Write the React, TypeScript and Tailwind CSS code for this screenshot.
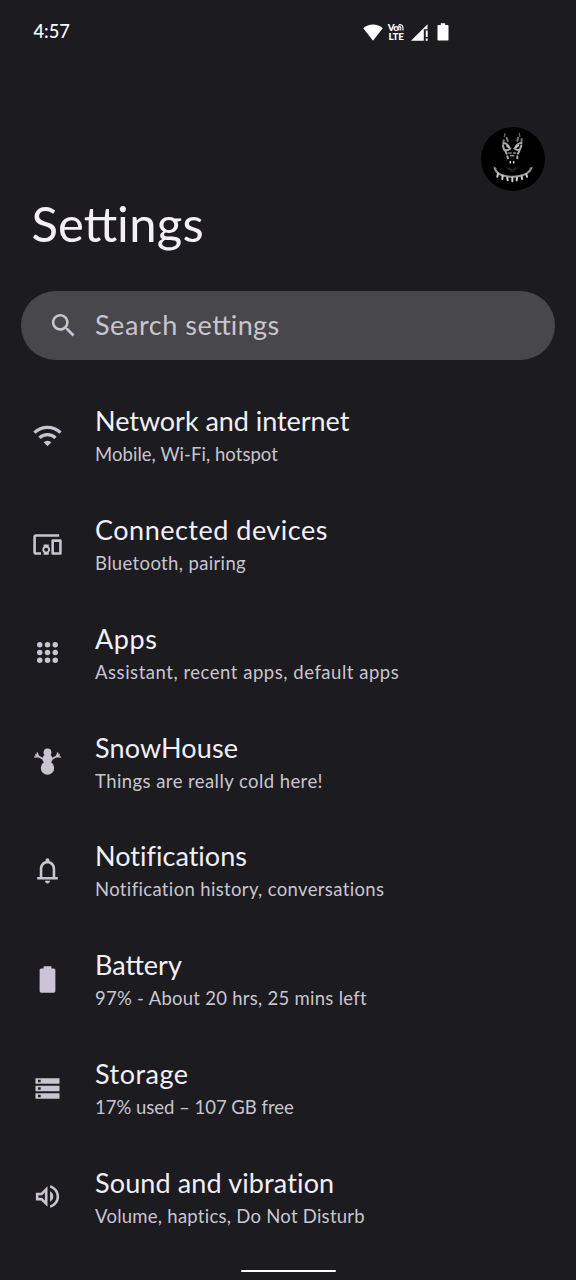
import type { ReactNode } from "react";

type Row = {
  title: string;
  sub: string;
  titleClass: string;
  subClass: string;
  icon: ReactNode;
};

function Glyph({ d, className = "fill-[#c9c5d0]" }: { d: string; className?: string }) {
  return (
    <svg viewBox="0 0 24 24" className={`size-[31px] ${className}`}>
      <path d={d} fillRule="evenodd" />
    </svg>
  );
}

function Snowman() {
  return (
    <svg viewBox="0 0 31 31" className="size-[31px] fill-[#c9c5d0] stroke-[#c9c5d0]">
      <circle cx="15.5" cy="6.3" r="3.9" stroke="none" />
      <circle cx="15.5" cy="13" r="5" stroke="none" />
      <circle cx="15.5" cy="22" r="6.7" stroke="none" />
      <path
        d="M12 13.5L3.2 8.5M19 13.5l8.8-5M6.4 10.3L5 6.5M24.6 10.3l1.4-3.8M6.6 10.6l-4.4.3M24.4 10.6l4.4.3"
        fill="none"
        strokeWidth="1.5"
      />
    </svg>
  );
}

const rows: Row[] = [
  {
    title: "Network and internet",
    sub: "Mobile, Wi-Fi, hotspot",
    titleClass: "tracking-[-0.05px]",
    subClass: "tracking-[0.05px]",
    icon: (
      <svg viewBox="0 0 24 24" className="size-[31px] fill-none stroke-[#c9c5d0]">
        <path d="M1.9 9.8a14.3 14.3 0 0 1 20.2 0M5.8 13.9a8.8 8.8 0 0 1 12.4 0" strokeWidth="2.5" />
        <path d="M12 20.3l-3-3a4.3 4.3 0 0 1 6 0z" className="fill-[#c9c5d0]" stroke="none" />
      </svg>
    ),
  },
  {
    title: "Connected devices",
    sub: "Bluetooth, pairing",
    titleClass: "tracking-[0.5px]",
    subClass: "tracking-[0.36px]",
    icon: (
      <Glyph d="M3 6h18V4H3c-1.1 0-2 .9-2 2v12c0 1.1.9 2 2 2h4v-2H3V6zm10 6H9v1.78c-.61.55-1 1.33-1 2.22s.39 1.67 1 2.22V20h4v-1.78c.61-.55 1-1.34 1-2.22s-.39-1.67-1-2.22V12zm-2 5.5c-.83 0-1.5-.67-1.5-1.5s.67-1.5 1.5-1.5 1.5.67 1.5 1.5-.67 1.5-1.5 1.5zM22 8h-6c-.5 0-1 .5-1 1v10c0 .5.5 1 1 1h6c.5 0 1-.5 1-1V9c0-.5-.5-1-1-1zm-1 10h-4v-8h4v8z" />
    ),
  },
  {
    title: "Apps",
    sub: "Assistant, recent apps, default apps",
    titleClass: "tracking-[0.6px]",
    subClass: "tracking-[0.53px]",
    icon: (
      <svg viewBox="0 0 24 24" className="size-[31px] fill-[#c9c5d0]">
        {[6, 12, 18].map((y) =>
          [6, 12, 18].map((x) => <circle key={`${x}-${y}`} cx={x} cy={y} r="2.1" />)
        )}
      </svg>
    ),
  },
  {
    title: "SnowHouse",
    sub: "Things are really cold here!",
    titleClass: "tracking-[0.12px]",
    subClass: "tracking-[0.43px]",
    icon: <Snowman />,
  },
  {
    title: "Notifications",
    sub: "Notification history, conversations",
    titleClass: "tracking-[0.02px]",
    subClass: "tracking-[0.35px]",
    icon: (
      <Glyph d="M18 17v-6c0-3.07-1.63-5.64-4.5-6.32V4c0-.83-.67-1.5-1.5-1.5s-1.5.67-1.5 1.5v.68C7.64 5.36 6 7.92 6 11v6H4v2h16v-2h-2zm-2 0H8v-6c0-2.48 1.51-4.5 4-4.5s4 2.02 4 4.5v6zm-4 5c1.1 0 2-.9 2-2h-4c0 1.1.9 2 2 2z" />
    ),
  },
  {
    title: "Battery",
    sub: "97% - About 20 hrs, 25 mins left",
    titleClass: "tracking-normal",
    subClass: "tracking-[0.27px]",
    icon: (
      <Glyph
        className="fill-[#cbc3d6]"
        d="M16.8 3.5H15V1.8H9v1.700H7.200c-.7 0-1.300.6-1.300 1.300v16.100c0 .7.6 1.300 1.300 1.300h9.600c.7 0 1.300-.6 1.300-1.300V4.800c0-.7-.6-1.300-1.300-1.300z"
      />
    ),
  },
  {
    title: "Storage",
    sub: "17% used – 107 GB free",
    titleClass: "tracking-[0.5px]",
    subClass: "tracking-[-0.02px]",
    icon: (
      <Glyph d="M2.7 20h18.6v-4.4H2.7V20zm2-3.2h2v2h-2v-2zM2.7 4v4.4h18.6V4H2.7zm4 3.2h-2v-2h2v2zM2.7 14.2h18.6V9.8H2.7v4.4zm2-3.2h2v2h-2v-2z" />
    ),
  },
  {
    title: "Sound and vibration",
    sub: "Volume, haptics, Do Not Disturb",
    titleClass: "tracking-[0.13px]",
    subClass: "tracking-[0.26px]",
    icon: (
      <Glyph d="M3 9v6h4l5 5V4L7 9H3zm7-.17v6.34L7.83 13H5v-2h2.83L10 8.83zM16.5 12c0-1.77-1.02-3.29-2.5-4.03v8.05c1.48-.73 2.5-2.25 2.5-4.02zM14 3.23v2.06c2.89.86 5 3.54 5 6.71s-2.11 5.85-5 6.71v2.06c4.01-.91 7-4.49 7-8.77s-2.99-7.86-7-8.77z" />
    ),
  },
];

function StatusBar() {
  return (
    <header className="flex h-[64px] items-center justify-between pr-[127px] pl-[33.5px] text-white">
      <span className="pb-px text-[18.3px] leading-none font-medium">4:57</span>
      <div className="flex items-center">
        <svg viewBox="0 0 20 17" className="h-[17px] w-[20px] fill-white">
          <path d="M10 16.8L.3 4.2C3 1.8 6.3.6 10 .6s7 1.2 9.7 3.6z" />
        </svg>
        <div className="ml-[4px] flex w-[18px] flex-col items-center text-[9.8px] leading-[9px] font-black">
          <span className="flex">
            <span className="tracking-[-0.5px]">Vo</span>
            <svg viewBox="0 0 7 9" className="h-[9px] w-[6px] fill-none stroke-white">
              <path d="M1 8V1.500M3.300 8V5M5.800 8V4M1 1q4.300-.5 4.800 3.500M1 3.300q2-.3 2.300 2" strokeWidth="1.3" />
            </svg>
          </span>
          <span className="tracking-[-0.2px]">LTE</span>
        </div>
        <svg viewBox="0 0 18 17" className="ml-[6px] h-[17px] w-[18px] fill-white">
          <path d="M0 16.7L16.5.2v5h-3.700v11.500z" />
          <path d="M14.7 6.500h2v6.400h-2zM14.700 14.500h2v2.200h-2z" />
        </svg>
        <svg viewBox="0 0 12 18" className="ml-[8px] h-[18px] w-[12px] fill-white">
          <path d="M10.5 2H8.2V.3H3.8V2H1.5C.9 2 .5 2.4.5 3v13.5c0 .6.4 1 1 1h9c.6 0 1-.4 1-1V3c0-.6-.4-1-1-1z" />
        </svg>
      </div>
    </header>
  );
}

function Avatar() {
  return (
    <svg viewBox="33 36 192 192" className="size-[64px] rounded-full bg-black fill-none stroke-[#a8a8a8]">
      <g strokeLinecap="round" strokeLinejoin="round">
        <path d="M105 56l-2 9M148 55l1 9" strokeWidth="4" stroke="#666" />
        <path d="M110 68l3 10M101 76l-1 12M144 68l-2 10M155 72l-1 14" strokeWidth="6" stroke="#7a7a7a" />
        <path d="M101 85q11-1 16 12M154 84q-13 1-18 13" strokeWidth="6" />
        <path d="M99 92l3 12q10 5 19-4M154 92l-4 11q-8 5-17-3" strokeWidth="6" />
        <path d="M111 93l5 3M145 92l-6 4" strokeWidth="5" stroke="#ccc" />
        <path d="M106 108l4 8M112 124l2 6M148 108l-4 8M142 124v6" strokeWidth="6" />
        <path d="M117 114h6M131 114h6M122 122h9" strokeWidth="5" stroke="#8c8c8c" />
        <path d="M121 140v3M131 140v3" strokeWidth="5" stroke="#ccc" />
        <path d="M110 158l17 12 17-12M118 159l9 6 9-6" strokeWidth="2" stroke="#484848" />
        <path d="M74 160q6 18 32 23q21 5 42 0q28-6 36-23" strokeWidth="6" stroke="#999" />
        <path d="M84 176l-2 9M98 182l-1 10M112 188l1 8M127 188v11M141 188l-1 8M155 184l1 8M169 178l2 7" strokeWidth="6" stroke="#d0d0d0" />
        <path d="M72 156l7 4M187 157l-8 3" strokeWidth="3" stroke="#777" />
      </g>
    </svg>
  );
}

export default function App() {
  return (
    <div className="relative flex h-[1280px] w-[576px] flex-col overflow-hidden bg-[#1c1b20] font-[Lato,sans-serif] text-[#f2eff7]">
      <StatusBar />
      <div className="flex justify-end pt-[63px] pr-[31px]">
        <Avatar />
      </div>
      <h1 className="mt-[2px] h-[60px] pl-[31.5px] text-[49px] leading-[60px] whitespace-nowrap">
        Sett<span className="tracking-[0.3px]">ings</span>
      </h1>
      <div className="mx-[21px] mt-[38px] flex h-[69px] shrink-0 items-center rounded-full bg-[#48474c] pl-[27px] text-[#c9c5d0]">
        <Glyph d="M15.5 14h-.79l-.28-.27C15.41 12.59 16 11.11 16 9.5 16 5.91 13.09 3 9.5 3S3 5.91 3 9.5 5.91 16 9.5 16c1.61 0 3.09-.59 4.23-1.57l.27.28v.79l5 4.99L20.49 19l-4.99-5zm-6 0C7.01 14 5 11.99 5 9.5S7.01 5 9.5 5 14 7.01 14 9.5 11.99 14 9.5 14z" />
        <span className="ml-[16px] pb-px text-[27px] leading-[34px] whitespace-nowrap">
          <span className="tracking-[0.55px]">Search se</span>tt<span className="tracking-[0.4px]">ings</span>
        </span>
      </div>
      <main className="mt-[21px] flex flex-col">
        {rows.map((row) => (
          <div key={row.title} className="flex h-[108.8px] shrink-0 items-center pl-[31.5px]">
            {row.icon}
            <div className="ml-[32.5px] flex flex-col pt-[1.5px] whitespace-nowrap">
              <span className={`text-[27px] leading-[36px] ${row.titleClass}`}>{row.title}</span>
              <span className={`text-[18.5px] leading-[30px] text-[#c9c5d0] ${row.subClass}`}>{row.sub}</span>
            </div>
          </div>
        ))}
      </main>
      <div className="absolute top-[1270px] left-[240.5px] h-[2px] w-[95px] rounded-full bg-white" />
    </div>
  );
}
